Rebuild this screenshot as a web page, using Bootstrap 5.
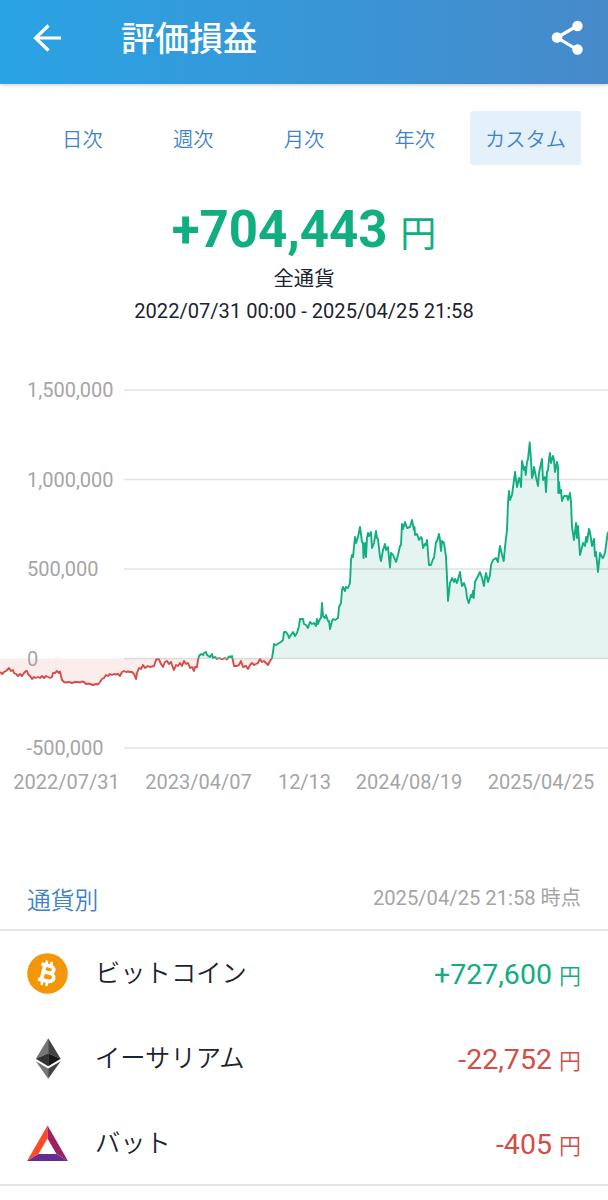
<!DOCTYPE html>
<html lang="ja">
<head>
<meta charset="utf-8">
<meta name="viewport" content="width=device-width, initial-scale=1">
<title>評価損益</title>
<link href="https://cdn.jsdelivr.net/npm/bootstrap@5.3.0/dist/css/bootstrap.min.css" rel="stylesheet">
<style>
body{font-family:Roboto,"Noto Sans CJK JP",sans-serif;color:#1c2331;background:#fff;font-size:20px;line-height:1.2;overflow:hidden}
.topbar{height:84px;background:linear-gradient(90deg,#29a3e4,#478aca);box-shadow:0 1px 4px rgba(50,40,60,.25);padding:0 24px 9px 32px}
.topbar h1{font-size:34px;font-weight:500;line-height:48px;margin-left:57px;padding-top:2px}
.periods{margin:27px 27px 0}
.periods .nav-link{height:54px;padding:4px 0 0;line-height:50px;color:#3f83c7;font-size:20.3px;font-weight:350;border-radius:3px}
.periods .nav-link.active{background:#e4f1fb;color:#3f83c7}
.gain{color:#10ae80}.loss{color:#d64c48}
.total{font-size:51px;font-weight:700;line-height:60px;margin-top:35px}
.total span{font-size:36px;font-weight:400}
.scope{line-height:30px;margin-top:-1px;font-size:20.3px}
.range{line-height:24px;margin-top:5px;font-size:20.1px}
.chart{margin-top:47px;height:430px}
.chart text{font-size:20px;fill:#a5a5a5}
.sect{height:131px;padding:0 27px;border-bottom:2px solid #e6e6e6}
.sect h2{font-size:23.8px;font-weight:350;color:#3f83c7;line-height:30px;margin-bottom:13px}
.sect small{font-size:20.2px;color:#a5a5a5;line-height:24px;margin-bottom:19px}
.coins{border-bottom:2px solid #e6e6e6;height:255px}
.coins li{height:85px;padding:0 27px;font-size:25.3px}
.coins .coin-name{margin-left:27px;padding-top:2px;font-weight:350}
.coins .amount{font-size:28.5px;padding-top:4px}
.coins .amount span{font-size:22px;font-weight:350}
</style>
</head>
<body>
<header class="topbar d-flex align-items-center text-white">
  <svg width="32" height="32" viewBox="0 0 32 32" fill="none" stroke="#fff" stroke-width="3.200"><path d="M16.500 3.500 3.500 16l13 12.500M3.500 16H29"/></svg>
  <h1 class="mb-0">評価損益</h1>
  <svg class="ms-auto" width="34" height="36" viewBox="0 0 34 36" fill="#fff"><path d="M27 6 7 17.500l20 12" fill="none" stroke="#fff" stroke-width="3.200"/><circle cx="27.500" cy="6" r="5.200"/><circle cx="7" cy="17.500" r="5.300"/><circle cx="27.500" cy="29.500" r="5.200"/></svg>
</header>
<main>
  <nav class="periods nav nav-pills nav-justified flex-nowrap">
    <a class="nav-link w-100" href="#">日次</a>
    <a class="nav-link w-100" href="#">週次</a>
    <a class="nav-link w-100" href="#">月次</a>
    <a class="nav-link w-100" href="#">年次</a>
    <a class="nav-link w-100 active" href="#">カスタム</a>
  </nav>
  <section class="text-center">
    <div class="total gain">+704,443 <span>円</span></div>
    <div class="scope">全通貨</div>
    <div class="range">2022/07/31 00:00 - 2025/04/25 21:58</div>
  </section>
  <svg class="chart d-block w-100" viewBox="0 370 608 430">
    <defs>
      <clipPath id="above"><rect y="370" width="608" height="288.500"/></clipPath>
      <clipPath id="below"><rect y="658.500" width="608" height="100"/></clipPath>
    </defs>
    <path d="M124 390H608M124 479.500H608M124 569H608M124 658.500H608M124 748H608" stroke="#e2e2e2" stroke-width="1.300"/>
    <g clip-path="url(#above)"><path class="area" fill="#0a9a74" fill-opacity=".105"/><path class="trace" fill="none" stroke="#10ae80" stroke-width="1.900" stroke-linejoin="round"/></g>
    <g clip-path="url(#below)"><path class="area" fill="#d64c48" fill-opacity=".1"/><path class="trace" fill="none" stroke="#d64c48" stroke-width="1.900" stroke-linejoin="round"/></g>
    <text x="27" y="397">1,500,000</text>
    <text x="27" y="486.500">1,000,000</text>
    <text x="27" y="576">500,000</text>
    <text x="27" y="665.500">0</text>
    <text x="26.500" y="755">-500,000</text>
    <g text-anchor="middle">
      <text x="66.500" y="789">2022/07/31</text>
      <text x="198.500" y="789">2023/04/07</text>
      <text x="304.500" y="789">12/13</text>
      <text x="409" y="789">2024/08/19</text>
      <text x="541" y="789">2025/04/25</text>
    </g>
  </svg>
  <section class="sect d-flex justify-content-between align-items-end">
    <h2>通貨別</h2>
    <small>2025/04/25 21:58 時点</small>
  </section>
  <ul class="coins list-unstyled mb-0">
    <li class="d-flex align-items-center">
      <svg width="41" height="41" viewBox="0 0 41 41"><circle cx="20.500" cy="20.500" r="20.300" fill="#f39708"/><g transform="rotate(13 20.500 20.500)" fill="none" stroke="#fff"><path d="M12.500 12.600H21c6.500 0 6.500 7 0 7h-5M12.500 28H22c7.500 0 7.500-8.300 0-8.300M16 12.600V28" stroke-width="3.700"/><path d="M17.200 8v5M22.200 8v5M17.200 28v5M22.200 28v5" stroke-width="2.600"/></g></svg>
      <span class="coin-name">ビットコイン</span>
      <span class="amount gain ms-auto">+727,600 <span>円</span></span>
    </li>
    <li class="d-flex align-items-center">
      <svg width="41" height="41" viewBox="0 0 41 41"><path d="M21.200.3 8.800 20.800l12.400-5.600z" fill="#777"/><path d="m21.200.3 12.500 20.500-12.500-5.600z" fill="#424242"/><path d="m8.800 20.800 12.400-5.600v13z" fill="#333"/><path d="m33.700 20.800-12.500-5.600v13z" fill="#171717"/><path d="m8.800 23.200 12.400 7.300v10.300z" fill="#777"/><path d="m33.700 23.200-12.500 7.300v10.300z" fill="#424242"/></svg>
      <span class="coin-name">イーサリアム</span>
      <span class="amount loss ms-auto">-22,752 <span>円</span></span>
    </li>
    <li class="d-flex align-items-center">
      <svg width="41" height="41" viewBox="0 0 41 41"><path d="M20.500 2.500 0 38l11.500-7 9-15.500z" fill="#ff4a25"/><path d="M20.500 2.500 41 38l-11.500-7-9-15.500z" fill="#9e1f63"/><path d="M0 38h41l-11.500-7h-18z" fill="#662d91"/></svg>
      <span class="coin-name">バット</span>
      <span class="amount loss ms-auto">-405 <span>円</span></span>
    </li>
  </ul>
</main>
<script src="https://cdn.jsdelivr.net/npm/bootstrap@5.3.0/dist/js/bootstrap.bundle.min.js"></script>
<script>
const series = `0,672 2,674 4,672 6,671 8,669 9,668 11,671 13,670 14,673 16,674 18,676 20,674 22,676 24,673 26,671 27,671 28,674 30,676 32,679 34,677 36,678 38,677 40,678 42,676 44,678 46,676 48,677 50,678 52,677 53,673 55,673 57,671 59,673 60,671.5 61,676 62,680 64,682 66,682.5 69,682 72,683 75,682 78,682 80,682.5 82,681.5 84,682 86,684 88,683.5 90,684 93,685 96,684 98,684.5 100,682 102,679 104,678 106,675 108,676 110,674 112,675 114,674 116,674.5 118,674 120,676 122,672 124,671 126,672 128,671.5 130,672 132,672 134,674 136,679 137,673 139,668 141,669 143,665 145,668 148,666 150,667 154,666 156,660 157,659
159,659.5 161,664 163,667 165,662 167,661 169,664 171,662 173,668 174,670 176,665 178,666 180,663 182,666 184,661 186,664 188,663 190,668 192,667 194,671 195,667 197,667 198,660 199,656 201,654 203,655 204,653 206,652 207,655 210,657 212,654 213,658 215,657 217,659 219,658 221,659 223,659 225,658 227,659.5 229,656.5 231,657 232,656 233,661 234,666 237,666 239,665 241,661 243,667 246,666 248,669 250,665 252,663 254,665 256,664 258,663 260,659 262,662 264,661 266,663 268,665 270,661 272,658
273,652 274,644 276,645 279,643 281,642 283,640 284,632 286,632 288,635 289,638 291,635 293,632 295,636 297,633 299,626 300,619 303,619 304,624 306,625 308,628 310,622 312,624 314,623 316,626 317,619 318,624 320,619 321,618 322,603 323,616 325,618 326,615 328,621 329,621 330,629 332,621 333,619 335,620 338,618 339,607 341,603 342,590 343,587 345,591 346,587 348,588 350,583 351,560 352,555 353,557 355,537 356,543 358,537 360,527 362,542 363,543 363.5,558 365,543 366,557 367,538 368,533 369,536 371,532 372,548 374,543 376,531 377,538 378,539 380,557 381,561 383,550 385,544 386,550 388,547 389,558 390,567.5 391,553 393,555 396,562 398,555 400,546 401,545 402,524 403,529 405,522 407,528 410,527 412,520 414,530 414.5,527 415,535 417,534 419,540 421,537 422,539 423,548 425,544 426,545 427,540 429,565 431,565 433,559 434,558 436,542 437,541 439,534 440,540 441,551 442,541 444,543 446,557 447,577 448,601 450,583 452,578 454,582 455,579 457,583 460,572 461,580 462,586 464,583 466,589 467,598 468.7,603 471,595 472,597 473,591 473.7,598 475,582 477,578 480,572 482,578 484,586 485,578 486,573 488,582 490,575 491,565 493,560 496,558 498,562 499,553 500,546 502,555 503.7,561 505,547 507,530 508,503 509,491 510,500 512,495 514,480 515,472 517,487 519,478 520,480 521,487 522,461 524,470 525,467 525.7,475 527,462 528,459 529.7,442.500 531,460 532,478 533,475 534,467 536,477 538,486 539,473 542,459 543,480 545,477 546,492 547,472 548,470 549,459 550,453 551,463 553,456 554,460 555,472 557,462 558,467 558.3,493 559,482 560,493 561,490 562,501 564,496 567,496 568,500 570,493 571,502 572,527 574,540 576,523 577,538 578,526 580,555 583,543 585,546 586,537 587,542 589,529 590,532 592,546 594,539 595,556 596,552 598,572 600,553 602,557 603,558 605,553 607,538 608,532`.replace(/\s+/g, ' ');
document.querySelectorAll('.trace').forEach(p => p.setAttribute('d', 'M' + series));
document.querySelectorAll('.area').forEach(p => p.setAttribute('d', 'M0,658.5 ' + series + ' 608,658.5Z'));
</script>
</body>
</html>
